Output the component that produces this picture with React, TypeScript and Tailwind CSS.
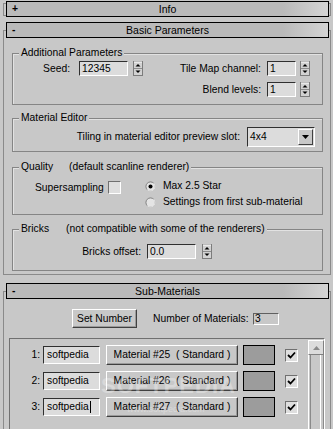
import React from 'react';

const font = "font-['Liberation_Sans',Arial,sans-serif]";

const Header = ({ sign, title, className = '' }: { sign: string; title: string; className?: string }) => (
  <div
    className={`relative flex items-center h-[16px] w-[323px] ml-[2px] border border-black bg-[linear-gradient(to_right,#bababa_86%,#d4d4d4)] ${className}`}
  >
    <span className="w-[24px] pl-[5px] font-bold leading-[12px]">{sign}</span>
    <span className="flex-1 text-center text-[10.5px] leading-[12px]">{title}</span>
    <span className="w-[24px]" />
  </div>
);

const Group = ({ label, className = '', children }: { label: React.ReactNode; className?: string; children: React.ReactNode }) => (
  <div className={`ml-[8px] w-[311px] border border-[#858585] shadow-[inset_1px_1px_0_#e2e2e2] ${className}`}>
    <div className="-mt-[7px] ml-[6px] flex h-[12px] w-fit bg-[#c8c8c8] px-[2px] leading-[12px]">{label}</div>
    {children}
  </div>
);

const Field = ({ value, className = '', cursor = false }: { value: string; className?: string; cursor?: boolean }) => (
  <div
    className={`flex items-center border border-t-[#303030] border-l-[#303030] border-b-white border-r-white bg-[#dcdcdc] pl-[2px] ${className}`}
  >
    <span>{value}</span>
    {cursor && <span className="ml-[1px] h-[12px] w-[1px] bg-black" />}
  </div>
);

const Spinner = ({ className = '' }: { className?: string }) => (
  <svg width="10" height="15" viewBox="0 0 10 15" className={className}>
    <rect x="0.5" y="0.5" width="9" height="14" fill="#d2d2d2" stroke="#7c7c7c" />
    <line x1="1" y1="1" x2="9" y2="1" stroke="#fff" />
    <line x1="1" y1="7.5" x2="9" y2="7.5" stroke="#8c8c8c" />
    <path d="M2.5 5.5 L7.5 5.5 L5 3 Z" fill="#000" />
    <path d="M2.5 9.5 L7.5 9.5 L5 12 Z" fill="#000" />
  </svg>
);

const Check = ({ checked = false, className = '' }: { checked?: boolean; className?: string }) => (
  <div
    className={`flex h-[13px] w-[13px] items-center justify-center border border-t-[#707070] border-l-[#707070] border-b-white border-r-white bg-[#dedede] ${className}`}
  >
    {checked && (
      <svg width="9" height="9" viewBox="0 0 9 9">
        <polyline points="1,4 3.5,6.5 8,1.5" fill="none" stroke="#000" strokeWidth="1.8" />
      </svg>
    )}
  </div>
);

const Radio = ({ on = false }: { on?: boolean }) => (
  <svg width="11" height="11" viewBox="0 0 12 12">
    <circle cx="6" cy="6" r="5" fill="#e4e4e4" stroke="#7a7a7a" />
    <path d="M9.54 2.46 A5 5 0 0 1 2.46 9.54" fill="none" stroke="#fff" />
    {on && <circle cx="6" cy="6" r="2.2" fill="#000" />}
  </svg>
);

const Btn = ({ children, className = '' }: { children: React.ReactNode; className?: string }) => (
  <div
    className={`flex items-center justify-center whitespace-pre border border-t-white border-l-white border-b-[#404040] border-r-[#404040] bg-[#c8c8c8] shadow-[inset_-1px_-1px_0_#9a9a9a] ${className}`}
  >
    {children}
  </div>
);

const rows = [
  { n: '1:', mat: 'Material #25  ( Standard )' },
  { n: '2:', mat: 'Material #26  ( Standard )' },
  { n: '3:', mat: 'Material #27  ( Standard )' },
];

export default function App() {
  return (
    <div className={`relative h-[429px] w-[333px] overflow-hidden bg-[#c8c8c8] pt-[3px] text-[10.3px] leading-[12px] text-black ${font}`}>
      {/* Info (collapsed) */}
      <div className="ml-[3px] h-[13px] w-[328px] border border-[#8a8a8a]">
        <Header sign="+" title="Info" className="-mt-[3px]" />
      </div>

      {/* Basic Parameters */}
      <div className="mt-[14px] ml-[3px] w-[328px] border border-[#8a8a8a] pb-[3px]">
        <Header sign="-" title="Basic Parameters" className="-mt-[9px]" />

        <Group label="Additional Parameters" className="mt-[15px] pb-[7px]">
          <div className="mt-[2px] flex h-[15px] items-center">
            <span className="w-[57px] text-right">Seed:</span>
            <Field value="12345" className="ml-[9px] h-[15px] w-[49px]" />
            <Spinner className="ml-[5px]" />
            <span className="w-[118px] text-right">Tile Map channel:</span>
            <Field value="1" className="ml-[6px] h-[15px] w-[29px]" />
            <Spinner className="ml-[4px]" />
          </div>
          <div className="mt-[6px] flex h-[15px] items-center">
            <span className="w-[248px] text-right">Blend levels:</span>
            <Field value="1" className="ml-[6px] h-[15px] w-[29px]" />
            <Spinner className="ml-[4px]" />
          </div>
        </Group>

        <Group label="Material Editor" className="mt-[13px] pb-[4px]">
          <div className="mt-[3px] flex items-center">
            <span className="w-[227px] text-right">Tiling in material editor preview slot:</span>
            <div className="ml-[7px] flex h-[20px] w-[68px] items-center border border-t-[#303030] border-l-[#303030] border-b-white border-r-white bg-[#dcdcdc] pl-[2px]">
              <span className="flex-1">4x4</span>
              <div className="mr-[1px] flex h-[16px] w-[15px] items-center justify-center border border-t-white border-l-white border-b-[#404040] border-r-[#404040] bg-[#c8c8c8]">
                <svg width="7" height="4" viewBox="0 0 7 4">
                  <path d="M0 0 L7 0 L3.5 4 Z" fill="#000" />
                </svg>
              </div>
            </div>
          </div>
        </Group>

        <Group
          label={
            <>
              <span>Quality</span>
              <span className="ml-[16px]">(default scanline renderer)</span>
            </>
          }
          className="mt-[15px] pb-[6px]"
        >
          <div className="mt-[7px] flex items-start">
            <div className="ml-[22px] mt-[1px] flex h-[13px] items-center">
              <span className="w-[73px]">Supersampling</span>
              <Check />
            </div>
            <div className="ml-[24px] flex flex-col">
              <div className="flex h-[12px] items-center">
                <Radio on />
                <span className="ml-[7px]">Max 2.5 Star</span>
              </div>
              <div className="mt-[4px] flex h-[12px] items-center">
                <Radio />
                <span className="ml-[7px]">Settings from first sub-material</span>
              </div>
            </div>
          </div>
        </Group>

        <Group
          label={
            <>
              <span>Bricks</span>
              <span className="ml-[17px]">(not compatible with some of the renderers)</span>
            </>
          }
          className="mt-[14px] pb-[11px]"
        >
          <div className="mt-[9px] flex h-[15px] items-center">
            <span className="w-[128px] text-right">Bricks offset:</span>
            <Field value="0.0" className="ml-[6px] h-[15px] w-[49px]" />
            <Spinner className="ml-[6px]" />
          </div>
        </Group>
      </div>

      {/* Sub-Materials */}
      <div className="mt-[16px] ml-[3px] h-[200px] w-[328px] border border-[#8a8a8a]">
        <Header sign="-" title="Sub-Materials" className="-mt-[9px]" />

        <div className="mt-[10px] flex h-[19px] items-center">
          <Btn className="ml-[68px] h-[19px] w-[65px]">Set Number</Btn>
          <span className="ml-[16px] w-[100px]">Number of Materials:</span>
          <div className="flex h-[12px] w-[26px] items-center border border-t-[#606060] border-l-[#606060] border-b-white border-r-white pl-[1px] leading-[10px]">
            3
          </div>
        </div>

        <div className="mt-[10px] ml-[5px] flex h-[130px] w-[316px] items-start border border-t-[#707070] border-l-[#707070] border-b-white border-r-white">
          <div className="mt-[6px] flex flex-col gap-[6px]">
            {rows.map((r, i) => (
              <div key={r.n} className="flex h-[20px] items-center">
                <span className="w-[30px] text-right">{r.n}</span>
                <Field value="softpedia" cursor={i === 2} className="ml-[3px] h-[18px] w-[57px] pl-[3px]" />
                <Btn className="ml-[6px] h-[20px] w-[132px]">{r.mat}</Btn>
                <div className="ml-[5px] h-[20px] w-[32px] border border-black bg-[#9c9c9c]" />
                <Check checked className="ml-[10px]" />
              </div>
            ))}
          </div>
          <div className="ml-[10px] mt-[1px] flex h-[128px] w-[16px] flex-col">
            <div className="flex h-[15px] items-center justify-center border border-t-white border-l-white border-b-[#808080] border-r-[#808080] bg-[#dcdcdc]">
              <svg width="7" height="4" viewBox="0 0 7 4">
                <path d="M0 4 L7 4 L3.5 0 Z" fill="#8a8a8a" />
              </svg>
            </div>
            <div className="flex flex-1 border-x border-l-white border-r-[#8a8a8a]">
              <div className="ml-[1px] w-[11px] border-x border-l-[#8a8a8a] border-r-white" />
            </div>
          </div>
        </div>
      </div>

      {/* watermark */}
      <div className="pointer-events-none absolute left-[101px] top-[375px] text-[22px] font-bold leading-[22px] tracking-[1px] text-white opacity-30">
        SOFTPEDIA
      </div>
      <div className="pointer-events-none absolute left-[127px] top-[404px] text-[9px] leading-[10px] text-white opacity-30">
        www.softpedia.com
      </div>
    </div>
  );
}
